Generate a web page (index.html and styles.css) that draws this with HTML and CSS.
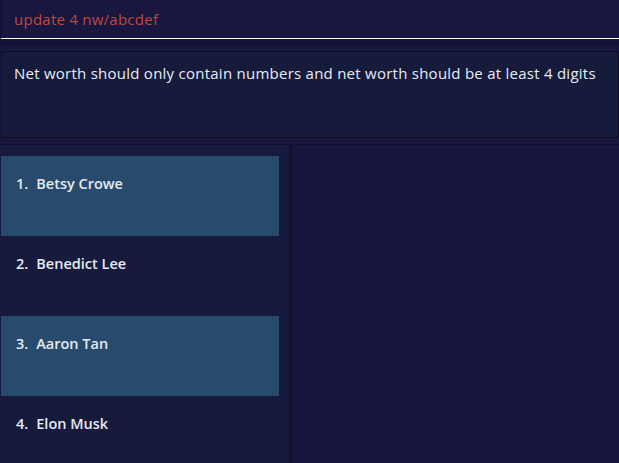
FILE: index.html
```html
<!DOCTYPE html>
<html>
<head>
<meta charset="utf-8">
<link rel="stylesheet" href="styles.css">
</head>
<body>
<div class="app">
  <div class="command-box">
    <div class="command-text">update 4 nw/abcdef</div>
  </div>
  <div class="separator"></div>
  <div class="result-box">
    <div class="result-text">Net worth should only contain numbers and net worth should be at least 4 digits</div>
  </div>
  <div class="main">
    <div class="list-panel">
      <div class="cell selected"><span class="idx">1.</span><span class="name">Betsy Crowe</span></div>
      <div class="cell"><span class="idx">2.</span><span class="name">Benedict Lee</span></div>
      <div class="cell selected"><span class="idx">3.</span><span class="name">Aaron Tan</span></div>
      <div class="cell"><span class="idx">4.</span><span class="name">Elon Musk</span></div>
    </div>
    <div class="divider"></div>
    <div class="detail-panel"></div>
  </div>
</div>
</body>
</html>
```
FILE: styles.css
```css
html, body {
  margin: 0;
  padding: 0;
  height: 100%;
  overflow: hidden;
}
body {
  background: #18173f;
  font-family: "Open Sans", "Noto Sans", sans-serif;
}
.app {
  display: flex;
  flex-direction: column;
  height: 463px;
}
.command-box {
  height: 38px;
  border-left: 2px solid #121131;
  border-bottom: 1px solid #ffffff;
  background: #18173f;
  display: flex;
  align-items: center;
  padding-left: 12px;
  box-sizing: content-box;
  flex: none;
}
.command-text {
  color: #c2463f;
  font-size: 15px;
  letter-spacing: 0.25px;
  line-height: 20px;
}
.separator {
  height: 5px;
  flex: none;
  background: #151436;
  border-bottom: 1px solid #100f2c;
  margin-bottom: 6px;
}
.result-box {
  height: 87px;
  background: #161b3c;
  border: 1px solid #0f0e2a;
  margin-left: 1px;
  padding: 11px 0 0 12px;
  box-sizing: border-box;
  flex: none;
}
.result-text {
  color: #e8ecf5;
  font-size: 15px;
  line-height: 20px;
  letter-spacing: 0.25px;
  white-space: nowrap;
}
.main {
  margin-top: 6px;
  border-top: 1px solid #100f2c;
  flex: 1;
  display: flex;
  min-height: 0;
}
.list-panel {
  width: 289px;
  background: #161a3c;
  padding: 11px 10px 0 1px;
  box-sizing: border-box;
  display: flex;
  flex-direction: column;
  overflow: hidden;
}
.cell {
  height: 80px;
  flex: none;
  padding: 18px 0 0 15px;
  box-sizing: border-box;
  color: #e6e9f0;
  font-size: 14.5px;
  line-height: 20px;
  font-weight: 600;
  display: flex;
}
.cell.selected {
  background: #284b6d;
}
.idx {
  margin-right: 8px;
}
.divider {
  width: 3px;
  background: #100f2c;
}
.detail-panel {
  flex: 1;
  background: #18163f;
}
```
